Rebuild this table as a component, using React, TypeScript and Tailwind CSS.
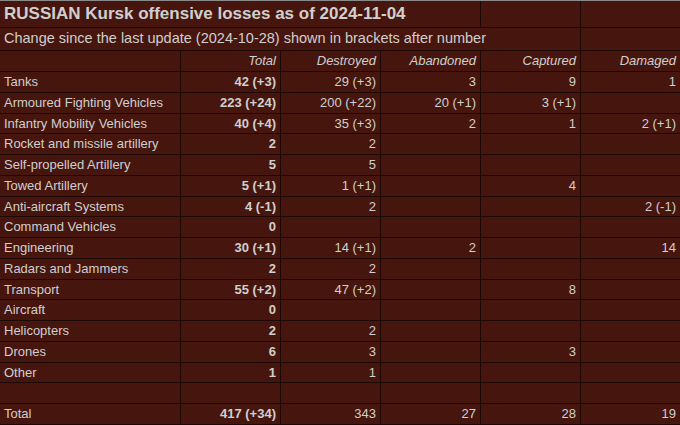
import React from "react";

const rows: [string, string, string, string, string, string][] = [
  ["Tanks", "42 (+3)", "29 (+3)", "3", "9", "1"],
  ["Armoured Fighting Vehicles", "223 (+24)", "200 (+22)", "20 (+1)", "3 (+1)", ""],
  ["Infantry Mobility Vehicles", "40 (+4)", "35 (+3)", "2", "1", "2 (+1)"],
  ["Rocket and missile artillery", "2", "2", "", "", ""],
  ["Self-propelled Artillery", "5", "5", "", "", ""],
  ["Towed Artillery", "5 (+1)", "1 (+1)", "", "4", ""],
  ["Anti-aircraft Systems", "4 (-1)", "2", "", "", "2 (-1)"],
  ["Command Vehicles", "0", "", "", "", ""],
  ["Engineering", "30 (+1)", "14 (+1)", "2", "", "14"],
  ["Radars and Jammers", "2", "2", "", "", ""],
  ["Transport", "55 (+2)", "47 (+2)", "", "8", ""],
  ["Aircraft", "0", "", "", "", ""],
  ["Helicopters", "2", "2", "", "", ""],
  ["Drones", "6", "3", "", "3", ""],
  ["Other", "1", "1", "", "", ""],
  ["", "", "", "", "", ""],
  ["Total", "417 (+34)", "343", "27", "28", "19"],
];

const cell = "bg-[#46160e] text-[#cfcfcf] flex items-center overflow-hidden whitespace-nowrap";

export default function App() {
  return (
    <div
      className="w-[680px] h-[425px] bg-[#1c0805] border-t border-[#8a8a8a] grid grid-cols-[180px_99px_99px_99px_99px_99px] grid-rows-[26px_22px_20px_repeat(17,19.75px)] gap-px"
      style={{ fontFamily: '"Liberation Sans", Arial, sans-serif' }}
    >
      <div className={`${cell} col-span-4 px-1 text-[17px] font-bold`}>RUSSIAN Kursk offensive losses as of 2024-11-04</div>
      <div className={cell}></div>
      <div className={cell}></div>
      <div className={`${cell} col-span-5 px-1 text-[14.5px]`}>Change since the last update (2024-10-28) shown in brackets after number</div>
      <div className={cell}></div>
      <div className={cell}></div>
      {["Total", "Destroyed", "Abandoned", "Captured", "Damaged"].map((h) => (
        <div key={h} className={`${cell} justify-end pr-1 text-[13px] italic`}>{h}</div>
      ))}
      {rows.map((r, i) => (
        <React.Fragment key={i}>
          <div className={`${cell} px-1 text-[13px]`}>{r[0]}</div>
          <div className={`${cell} justify-end pr-1 text-[13px] font-bold`}>{r[1]}</div>
          <div className={`${cell} justify-end pr-1 text-[13px]`}>{r[2]}</div>
          <div className={`${cell} justify-end pr-1 text-[13px]`}>{r[3]}</div>
          <div className={`${cell} justify-end pr-1 text-[13px]`}>{r[4]}</div>
          <div className={`${cell} justify-end pr-1 text-[13px]`}>{r[5]}</div>
        </React.Fragment>
      ))}
    </div>
  );
}
